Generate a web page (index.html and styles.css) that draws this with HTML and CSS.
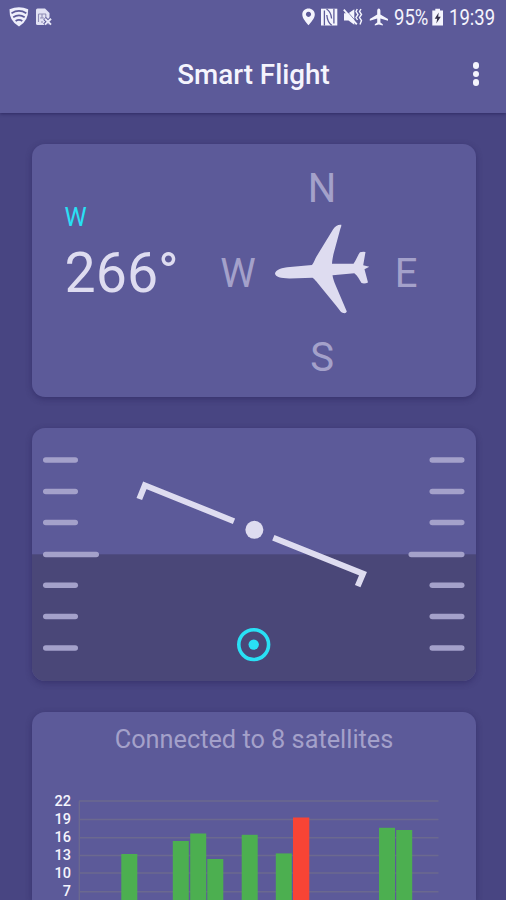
FILE: index.html
```html
<!DOCTYPE html>
<html lang="en">
<head>
  <meta charset="UTF-8" />
  <meta name="viewport" content="width=device-width, initial-scale=1.0"/>
  <title>Smart Flight</title>
  <link rel="stylesheet" href="styles.css">
</head>
<body>

<header class="header">
  <div class="status">
    <svg class="status-left" width="60" height="34" viewBox="0 0 60 34">
      <path d="M9.5 9.2 Q19 5.5 28.2 9.2 Q28.5 21 19 26.5 Q9 21 9.5 9.2Z" fill="#eeeefb"/>
      <path d="M11.5 13.2 Q19 8.6 26.3 13.2 M13.2 17.2 Q19 13.4 24.7 17.2 M15.6 21 Q19 18.6 22.3 21" fill="none" stroke="#5c5a99" stroke-width="1.7"/>
      <path d="M36 10 Q36 8.5 37.5 8.5 H45 L49.5 13 V25 H37.5 Q36 25 36 23.5Z" fill="#e2e2f4"/>
      <path d="M38.5 14 H46 M38.5 14 V22 M42 14 V18 M45.8 14 V18 M40 18 H44 M42 21 V23" fill="none" stroke="#8f8db5" stroke-width="1.1"/>
      <path d="M44.6 18.4 L51.5 25 M51.5 18.4 L44.6 25" stroke="#5c5a99" stroke-width="4"/>
      <path d="M45 18.8 L51 24.6 M51 18.8 L45 24.6" stroke="#e8e8f8" stroke-width="2"/>
    </svg>
    <svg width="93" height="34" viewBox="300 0 93 34" fill="#f4f4fd">
      <path fill-rule="evenodd" d="M308.5 8.5 C305 8.5 302.3 11 302.3 14.5 C302.3 18.5 306.3 22.5 308.5 25.3 C310.7 22.5 314.8 18.5 314.8 14.5 C314.8 11 312 8.5 308.5 8.5Z M308.5 11.7 A2.6 2.6 0 1 1 308.49 11.7Z"/>
      <path d="M321 8.7 H337.3 V25.5 H321Z"/>
      <path d="M324.4 25.5 V10.5 M333.9 8.7 V23.5" fill="none" stroke="#5c5a99" stroke-width="1.3"/>
      <path d="M326.5 9 Q331 11.5 331.6 18.5 M326.8 15 Q327.5 22.5 331.8 25.3" fill="none" stroke="#5c5a99" stroke-width="1.3"/>
      <path d="M344 13.2 H348.5 L354.3 9.2 V24.8 L348.5 20.5 H344Z"/>
      <path d="M345.2 9.2 L357.5 23.2" stroke="#5c5a99" stroke-width="0.8"/>
      <path d="M343.8 9.6 L356.8 24.4" stroke="#f4f4fd" stroke-width="1.8"/>
      <path d="M357.3 9 L356 11.5 L358 14.5 L356 17.5 L357.5 20 M361 9 L359.5 11.5 L361.5 14.5 L359.5 17.5 L361.5 20.5 L360 24.5" fill="none" stroke="#f4f4fd" stroke-width="1.4"/>
      <path d="M378.8 8.5 Q380.3 8.5 380.4 10.5 V14.5 L388 19 V20.7 L380.4 18.6 V22.6 L382.8 24.3 V25.6 L378.8 24.6 L374.8 25.6 V24.3 L377.2 22.6 V18.6 L369.8 20.7 V19 L377.2 14.5 V10.5 Q377.3 8.5 378.8 8.5Z"/>
    </svg>
    <span class="percent">95%</span>
    <svg width="18" height="34" viewBox="431 0 18 34">
      <path d="M432.3 10.5 H435.3 V8.8 H440 V10.5 H443 V25.5 H432.3Z" fill="#f4f4fd"/>
      <path d="M438.7 12.5 L434.7 18.8 H437.2 L436.3 23.6 L440.8 16.8 H438.2Z" fill="#33304a"/>
    </svg>
    <span class="time">19:39</span>
  </div>
  <div class="toolbar">
    <h1>Smart Flight</h1>
    <button class="menu" aria-label="Menu"><i></i><i></i><i></i></button>
  </div>
</header>

<main class="cards">
  <section class="card compass">
    <div class="heading">
      <div class="direction">W</div>
      <div class="degrees">266°</div>
    </div>
    <div class="rose">
      <span class="north">N</span>
      <span class="west">W</span>
      <svg class="plane" width="96" height="92" viewBox="274 223 96 92">
        <path d="M275 273.5 C275.5 269.5 282 267.4 290 266.9 L312 265 C314 262.5 315 259 316.5 256.5 L333 229.5 C335 226 338.5 224.3 341.3 224.8 C341.5 226.5 340.5 228 340 230 L333.5 254 C332.8 257.5 332.2 260.5 332 263.8 L353.5 263.7 C356 260.5 357.5 255.5 360 252.3 Q363 251.3 365.5 252 L363.2 265.3 L369.3 266.8 L364.5 269.2 L368 282.5 Q364.5 284 361.5 283 C359.5 280 357.5 275.5 354.3 273.3 L332.5 275.2 C333 278.5 334 281.5 335.5 285 L346.8 311.5 Q346 314 342.5 312.8 C340.5 312 338.8 309 337 306.7 L318 283.5 C316 281 315 279.5 312.5 277.7 L290 278.4 C281 278.5 275.5 277 275 273.5Z" fill="#dedcf0"/>
      </svg>
      <span class="east">E</span>
      <span class="south">S</span>
    </div>
  </section>

  <section class="card attitude">
    <svg width="444" height="253" viewBox="32 428 444 253">
      <rect x="32" y="554.3" width="444" height="127" fill="#4a4778"/>
      <g fill="#a4a1ca">
        <rect x="43" y="457.3" width="35" height="5.5" rx="2.8"/>
        <rect x="43" y="488.7" width="35" height="5.5" rx="2.8"/>
        <rect x="43" y="519.8" width="35" height="5.5" rx="2.8"/>
        <rect x="43" y="551.8" width="56" height="5.5" rx="2.8"/>
        <rect x="43" y="582.5" width="35" height="5.5" rx="2.8"/>
        <rect x="43" y="613.8" width="35" height="5.5" rx="2.8"/>
        <rect x="43" y="645.2" width="35" height="5.5" rx="2.8"/>
        <rect x="429.5" y="457.3" width="35" height="5.5" rx="2.8"/>
        <rect x="429.5" y="488.7" width="35" height="5.5" rx="2.8"/>
        <rect x="429.5" y="519.8" width="35" height="5.5" rx="2.8"/>
        <rect x="408.5" y="551.8" width="56" height="5.5" rx="2.8"/>
        <rect x="429.5" y="582.5" width="35" height="5.5" rx="2.8"/>
        <rect x="429.5" y="613.8" width="35" height="5.5" rx="2.8"/>
        <rect x="429.5" y="645.2" width="35" height="5.5" rx="2.8"/>
      </g>
      <g fill="none" stroke="#dedcf0" stroke-width="6">
        <path d="M139.3 499 L144.8 485.3 L234 521.2"/>
        <path d="M273.3 537.8 L363 573.7 L357.7 586.2"/>
      </g>
      <circle cx="254.4" cy="529.8" r="9" fill="#dedcf0"/>
      <circle cx="253.7" cy="644.6" r="14.9" fill="none" stroke="#29e0f5" stroke-width="3.6"/>
      <circle cx="253.7" cy="644.6" r="5.2" fill="#29e0f5"/>
    </svg>
  </section>

  <section class="card satellites">
    <h2>Connected to 8 satellites</h2>
    <div class="chart">
      <div class="scale">
        <span>22</span><span>19</span><span>16</span><span>13</span><span>10</span><span>7</span>
      </div>
      <svg width="361" height="110" viewBox="78 790 361 110">
        <path d="M79 801 H438.5 M79 819.5 H438.5 M79 837.8 H438.5 M79 855.5 H438.5 M79 873 H438.5 M79 891.8 H438.5 M79.3 801 V900" fill="none" stroke="#6b698f" stroke-width="1.4"/>
        <g fill="#4caf50">
          <rect x="121.3" y="854" width="16" height="46"/>
          <rect x="172.8" y="841" width="16" height="59"/>
          <rect x="190.2" y="833.5" width="16" height="67"/>
          <rect x="207.3" y="859" width="16" height="41"/>
          <rect x="241.7" y="834.8" width="16" height="66"/>
          <rect x="275.8" y="853.4" width="16" height="47"/>
          <rect x="379" y="827.8" width="16" height="73"/>
          <rect x="396.2" y="830" width="16" height="70"/>
        </g>
        <rect x="293" y="817.5" width="16.3" height="83" fill="#f84435"/>
      </svg>
    </div>
  </section>
</main>

</body>
</html>
```

FILE: styles.css
```css
* {
  box-sizing: border-box;
}

body {
  margin: 0;
  height: 900px;
  overflow: hidden;
  background-color: #484582;
  color: #f4f4fd;
  font-family: Roboto, sans-serif;
}

.header {
  height: 113px;
  background: #5c5a99;
  box-shadow: 0 1px 3px rgba(30, 25, 80, 0.6);
}

.status {
  display: flex;
  align-items: center;
  height: 34px;
  font-size: 21.5px;
  line-height: 34px;
}

.status-left {
  margin-right: 240px;
}

.status svg {
  flex: none;
}

.percent,
.time {
  flex: none;
  padding-top: 1px;
  transform-origin: left center;
  transform: scaleX(0.86);
}

.percent {
  width: 37px;
  margin-left: 1px;
}

.toolbar {
  display: grid;
  grid-template-columns: 60px 1fr 60px;
  align-items: center;
  height: 80px;
}

h1 {
  grid-column: 2;
  margin: 0;
  padding: 1px 0 0 1px;
  font-size: 27.8px;
  font-weight: 500;
  text-align: center;
}

.menu {
  display: flex;
  flex-direction: column;
  align-items: center;
  gap: 2.2px;
  padding: 0;
  border: none;
  background: none;
}

.menu i {
  width: 6.4px;
  height: 6.4px;
  border-radius: 50%;
  background: #f4f4fd;
}

.cards {
  display: flex;
  flex-direction: column;
  gap: 31px;
  height: 787px;
  padding: 31px 30px 0 32px;
}

.card {
  flex: none;
  height: 253px;
  border-radius: 13px;
  background: #5c5a99;
  box-shadow: 0 2px 6px rgba(35, 28, 85, 0.45);
  overflow: hidden;
}

.compass {
  display: flex;
}

.heading {
  width: 183px;
  padding: 58px 0 0 32.5px;
}

.direction {
  color: #29e0f5;
  font-size: 25px;
  line-height: 32px;
}

.degrees {
  color: #dedcf0;
  font-size: 55.5px;
  line-height: 79px;
}

.rose {
  display: grid;
  grid-template-columns: 46px 122px 46px;
  grid-template-rows: 86px 84px 84px;
  place-items: center;
  padding-top: 2px;
  color: #a4a1ca;
  font-size: 40px;
  line-height: 40px;
}

.north,
.south {
  grid-column: 2;
}

.west {
  grid-column: 1;
}

.plane {
  margin-top: -10px;
}

.attitude svg {
  display: block;
}

.satellites {
  height: 188px;
  border-radius: 13px 13px 0 0;
}

.satellites h2 {
  margin: 0;
  padding-top: 10px;
  color: #a4a1ca;
  font-size: 25.3px;
  font-weight: 400;
  line-height: 36px;
  text-align: center;
}

.chart {
  display: flex;
  margin-top: 32px;
}

.scale {
  display: flex;
  flex-direction: column;
  width: 39px;
  margin-right: 7px;
  padding-top: 2.6px;
  font-size: 14.5px;
  font-weight: 500;
  line-height: 18.1px;
  text-align: right;
}
```
